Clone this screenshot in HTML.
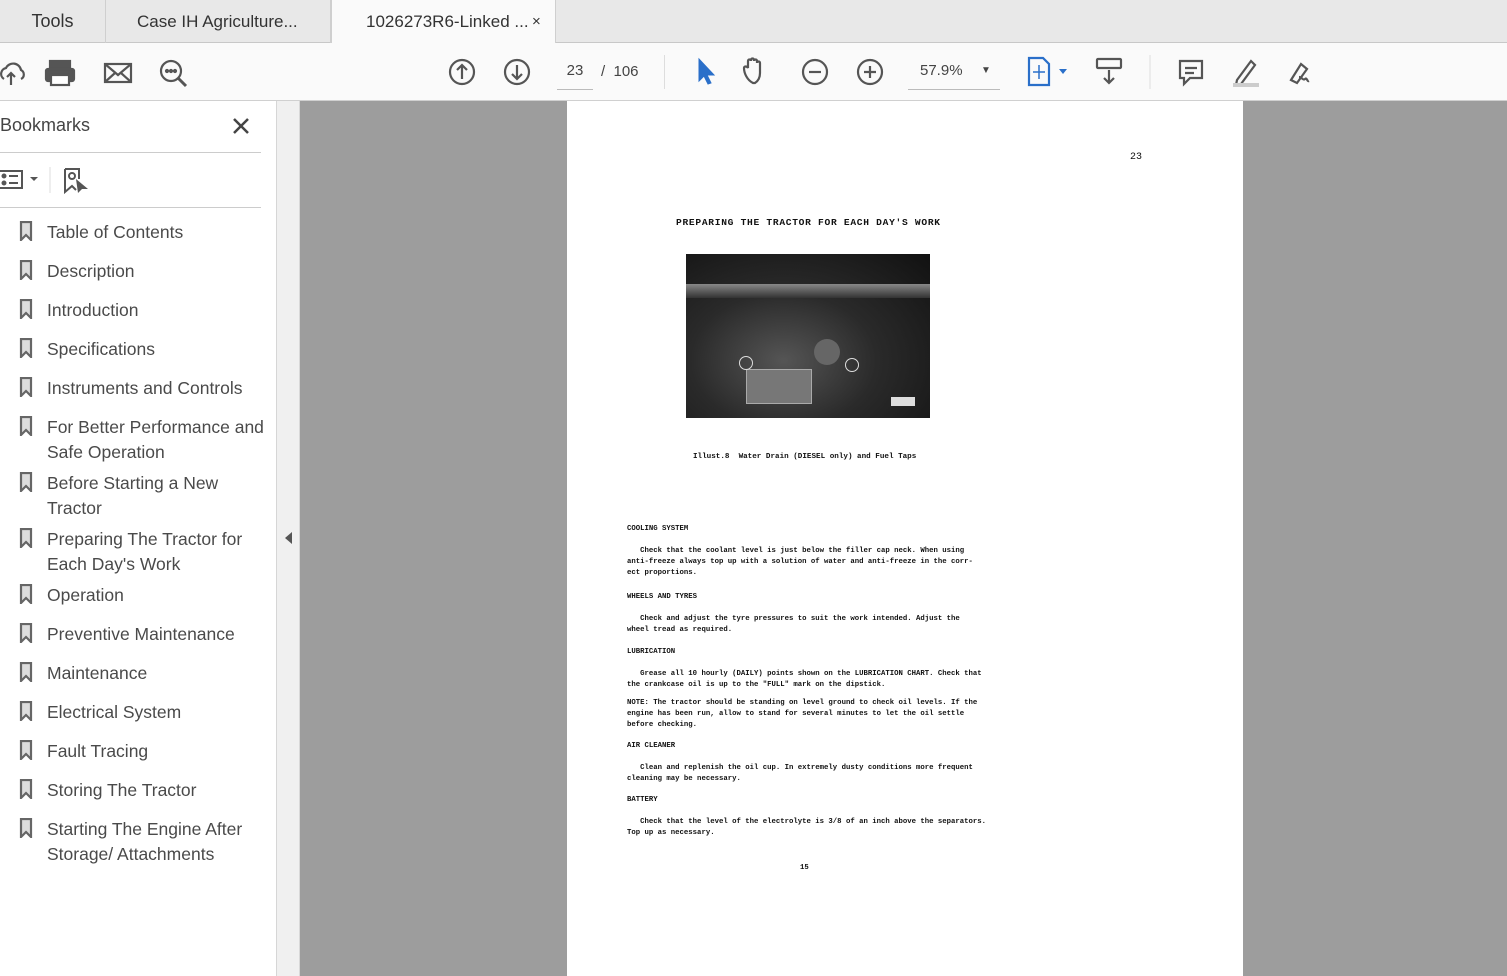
<!DOCTYPE html>
<html><head><meta charset="utf-8"><style>
*{margin:0;padding:0;box-sizing:border-box}
body{width:1507px;height:976px;overflow:hidden;background:#fff;font-family:"Liberation Sans",sans-serif;position:relative}
.abs{position:absolute}
#tabs{left:0;top:0;width:1507px;height:43px;background:#e8e8e8;border-bottom:1px solid #c8c8c8}
.tab{position:absolute;top:0;height:43px;font-size:17px;color:#333;line-height:43px;border-right:1px solid #cfcfcf}
#tb{left:0;top:43px;width:1507px;height:58px;background:#fafafa;border-bottom:1px solid #d0d0d0}
#side{left:0;top:101px;width:277px;height:875px;background:#fff;border-right:1px solid #d6d6d6}
#split{left:277px;top:101px;width:23px;height:875px;background:#f0f0f0;border-right:1px solid #d8d8d8}
#gray{left:300px;top:101px;width:1207px;height:875px;background:#9d9d9d}
#page{left:567px;top:101px;width:676px;height:875px;background:#fff}
.bm{position:absolute;left:47px;font-size:17.5px;color:#4a4a4a;line-height:25px}
.bi{position:absolute;left:19px;width:14px;height:20px}
.m{position:absolute;font-family:"Liberation Mono",monospace;font-weight:bold;font-size:7.3px;color:#111;white-space:pre;line-height:11px}
svg{position:absolute}
</style></head><body>
<div id="tabs" class="abs">
 <div class="tab" style="left:0;width:106px;text-align:center;font-size:18px">Tools</div>
 <div class="tab" style="left:106px;width:225px;padding-left:31px">Case IH Agriculture...</div>
 <div class="tab" style="left:331px;width:225px;background:#fafafa;height:44px;padding-left:34px;border-left:1px solid #cfcfcf">1026273R6-Linked ... <span style="position:absolute;left:200px;font-size:15px">×</span></div>
</div>
<div id="tb" class="abs">
 <svg style="left:0;top:14px" width="210" height="32" viewBox="0 0 210 32" fill="none" stroke="#555" stroke-width="2.2">
  <path d="M4 22 a6 6 0 0 1 2-11 a8 8 0 0 1 15 2 a5 5 0 0 1 0 9 M11 28 v-12 m-4 4 l4-4 4 4"/>
  <rect x="50" y="4" width="20" height="8" fill="#555"/><rect x="46" y="12" width="28" height="12" rx="2" fill="#555"/><rect x="51" y="18" width="18" height="10" fill="#fff"/>
  <rect x="105" y="7" width="26" height="18"/><path d="M105 7 l13 11 13-11 M105 25 l10-9 M131 25 l-10-9"/>
  <circle cx="171" cy="14" r="10"/><path d="M178 21 l8 8" stroke-width="3"/><circle cx="167" cy="14" r="1" fill="#555"/><circle cx="171" cy="14" r="1" fill="#555"/><circle cx="175" cy="14" r="1" fill="#555"/>
 </svg>
 <svg style="left:445px;top:13px" width="90" height="32" fill="none" stroke="#555" stroke-width="2.2">
  <circle cx="17" cy="16" r="12"/><path d="M17 23 v-14 m-5 5 l5-5 5 5"/>
  <circle cx="72" cy="16" r="12"/><path d="M72 9 v14 m-5-5 l5 5 5-5"/>
 </svg>
 <div class="abs" style="left:557px;top:19px;width:36px;height:28px;border-bottom:1px solid #bbb;text-align:center;font-size:15px;color:#444">23</div>
 <div class="abs" style="left:601px;top:20px;font-size:15px;color:#444">/ &nbsp;106</div>
 <div class="abs" style="left:664px;top:12px;width:1px;height:34px;background:#ddd"></div>
 <svg style="left:690px;top:12px" width="340" height="34" fill="none" stroke="#555" stroke-width="2.2">
  <path d="M9 4 v22 l5-5 4 8 3-1 -4-8 7 0z" fill="#2a6fc9" stroke="#2a6fc9" stroke-width="1"/>
  <path d="M63 28 c-6-3-9-10-9-15 c0-2 3-2 4 0 v-7 c0-2 3-2 3 0 v-1 c0-2 3-2 3 0 v1 c0-2 3-2 3 0 v2 c0-2 3-2 3 0 v10 c0 5-2 8-5 10z"/>
  <circle cx="125" cy="17" r="12"/><path d="M119 17 h12"/>
  <circle cx="180" cy="17" r="12"/><path d="M174 17 h12 M180 11 v12"/>
 </svg>
 <div class="abs" style="left:908px;top:19px;width:92px;height:28px;border-bottom:1px solid #bbb;font-size:15px;color:#444;padding-left:12px">57.9%<span style="position:absolute;left:73px;font-size:10px;top:3px">▼</span></div>
 <svg style="left:1025px;top:12px" width="300" height="34" fill="none" stroke-width="2.2">
  <path d="M4 3 h14 l6 6 v21 h-20z" stroke="#2a6fc9"/><path d="M14 10 v14 M8 17 h12" stroke="#2a6fc9" stroke-width="1.5"/>
  <path d="M34 14 l4 5 4-5z" fill="#2a6fc9"/>
  <rect x="72" y="4" width="24" height="9" rx="1" stroke="#555"/><path d="M84 15 v13 m-5-5 l5 5 5-5" stroke="#555"/>
  <path d="M125 0 v34" stroke="#ddd" stroke-width="1"/>
  <path d="M155 6 h22 v17 h-12 l-6 6 v-6 h-4z M160 13 h12 M160 18 h9" stroke="#555"/>
  <path d="M212 25 l14-19 4 4 -14 19 -5 1z" stroke="#555"/><path d="M208 30 h26" stroke="#ccc" stroke-width="4"/>
  <path d="M266 25 l10-16 6 5 -10 14z M274 22 c3 0 4 4 6 2 s2 3 4 2" stroke="#555"/>
 </svg>
</div>
<div id="side" class="abs">
 <div class="abs" style="left:0;top:14px;font-size:18px;color:#444">Bookmarks</div>
 <svg style="left:232px;top:16px" width="18" height="18" stroke="#444" stroke-width="2.5"><path d="M2 2 L16 16 M16 2 L2 16"/></svg>
 <div class="abs" style="left:0;top:51px;width:261px;height:1px;background:#ccc"></div>
 <svg style="left:0;top:64px" width="100" height="30" fill="none" stroke="#555" stroke-width="2">
  <rect x="-2" y="6" width="24" height="17"/><circle cx="4" cy="11" r="1.5" fill="#555"/><circle cx="4" cy="18" r="1.5" fill="#555"/><path d="M9 11 h9 M9 18 h9"/>
  <path d="M30 12 l4 4 4-4z" fill="#555" stroke="none"/>
  <path d="M50 2 v26" stroke="#ddd" stroke-width="1"/>
  <path d="M65 4 h14 v10 M65 4 v23 l7-6 4 4" /><circle cx="72" cy="11" r="3"/><path d="M76 14 l2 14 4-4 6 0z" fill="#555" stroke="none"/>
 </svg>
 <div class="abs" style="left:0;top:106px;width:261px;height:1px;background:#ccc"></div>
</div>
<div id="split" class="abs"><svg style="left:8px;top:431px" width="8" height="12"><path d="M7 0 L0 6 L7 12z" fill="#555"/></svg></div>
<div id="gray" class="abs"></div>
<div id="page" class="abs">
 <div class="m" style="left:563px;top:51px;font-weight:normal;font-size:10px">23</div>
 <div class="m" style="left:109px;top:116px;font-size:9.6px;letter-spacing:0.7px">PREPARING THE TRACTOR FOR EACH DAY'S WORK</div>
 <div class="abs" style="left:119px;top:153px;width:244px;height:164px;background:radial-gradient(ellipse at 40% 65%,#555 0%,#2a2a2a 45%,#111 100%)">
  <div class="abs" style="left:0;top:30px;width:244px;height:14px;background:linear-gradient(#888,#333)"></div>
  <div class="abs" style="left:60px;top:115px;width:66px;height:35px;background:#777;border:1px solid #aaa"></div>
  <div class="abs" style="left:128px;top:85px;width:26px;height:26px;border-radius:50%;background:#666"></div>
  <div class="abs" style="left:205px;top:143px;width:24px;height:9px;background:#ddd"></div>
  <div class="abs" style="left:53px;top:102px;width:14px;height:14px;border-radius:50%;border:1.5px solid #ddd"></div>
  <div class="abs" style="left:159px;top:104px;width:14px;height:14px;border-radius:50%;border:1.5px solid #ddd"></div>
 </div>
 <div class="m" style="left:126px;top:351px;font-size:7.6px">Illust.8  Water Drain (DIESEL only) and Fuel Taps</div>
 <div class="m" style="left:60px;top:423px">COOLING SYSTEM</div>
 <div class="m" style="left:60px;top:445px">   Check that the coolant level is just below the filler cap neck. When using
anti-freeze always top up with a solution of water and anti-freeze in the corr-
ect proportions.</div>
 <div class="m" style="left:60px;top:491px">WHEELS AND TYRES</div>
 <div class="m" style="left:60px;top:513px">   Check and adjust the tyre pressures to suit the work intended. Adjust the
wheel tread as required.</div>
 <div class="m" style="left:60px;top:546px">LUBRICATION</div>
 <div class="m" style="left:60px;top:568px">   Grease all 10 hourly (DAILY) points shown on the LUBRICATION CHART. Check that
the crankcase oil is up to the "FULL" mark on the dipstick.</div>
 <div class="m" style="left:60px;top:597px">NOTE: The tractor should be standing on level ground to check oil levels. If the
engine has been run, allow to stand for several minutes to let the oil settle
before checking.</div>
 <div class="m" style="left:60px;top:640px">AIR CLEANER</div>
 <div class="m" style="left:60px;top:662px">   Clean and replenish the oil cup. In extremely dusty conditions more frequent
cleaning may be necessary.</div>
 <div class="m" style="left:60px;top:694px">BATTERY</div>
 <div class="m" style="left:60px;top:716px">   Check that the level of the electrolyte is 3/8 of an inch above the separators.
Top up as necessary.</div>
 <div class="m" style="left:233px;top:762px">15</div>
</div>
<svg width="0" height="0" style="position:absolute"><defs><path id="bk" d="M2 1 h10 v18 l-5-5 -5 5z" fill="#ddd" stroke="#666" stroke-width="2.2"/></defs></svg>
<div id="bms">
 <svg class="bi" style="top:221px"><use href="#bk"/></svg><div class="bm" style="top:220px">Table of Contents</div>
 <svg class="bi" style="top:260px"><use href="#bk"/></svg><div class="bm" style="top:259px">Description</div>
 <svg class="bi" style="top:299px"><use href="#bk"/></svg><div class="bm" style="top:298px">Introduction</div>
 <svg class="bi" style="top:338px"><use href="#bk"/></svg><div class="bm" style="top:337px">Specifications</div>
 <svg class="bi" style="top:377px"><use href="#bk"/></svg><div class="bm" style="top:376px">Instruments and Controls</div>
 <svg class="bi" style="top:416px"><use href="#bk"/></svg><div class="bm" style="top:415px">For Better Performance and<br>Safe Operation</div>
 <svg class="bi" style="top:472px"><use href="#bk"/></svg><div class="bm" style="top:471px">Before Starting a New<br>Tractor</div>
 <svg class="bi" style="top:528px"><use href="#bk"/></svg><div class="bm" style="top:527px">Preparing The Tractor for<br>Each Day's Work</div>
 <svg class="bi" style="top:584px"><use href="#bk"/></svg><div class="bm" style="top:583px">Operation</div>
 <svg class="bi" style="top:623px"><use href="#bk"/></svg><div class="bm" style="top:622px">Preventive Maintenance</div>
 <svg class="bi" style="top:662px"><use href="#bk"/></svg><div class="bm" style="top:661px">Maintenance</div>
 <svg class="bi" style="top:701px"><use href="#bk"/></svg><div class="bm" style="top:700px">Electrical System</div>
 <svg class="bi" style="top:740px"><use href="#bk"/></svg><div class="bm" style="top:739px">Fault Tracing</div>
 <svg class="bi" style="top:779px"><use href="#bk"/></svg><div class="bm" style="top:778px">Storing The Tractor</div>
 <svg class="bi" style="top:818px"><use href="#bk"/></svg><div class="bm" style="top:817px">Starting The Engine After<br>Storage/ Attachments</div>
</div>
</body></html>
